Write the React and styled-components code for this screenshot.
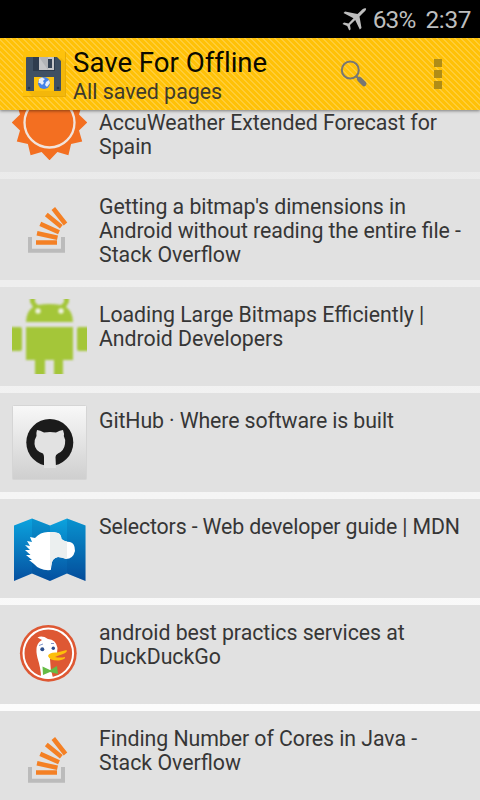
import React from "react";
import styled, { createGlobalStyle } from "styled-components";

const Global = createGlobalStyle`
  * { box-sizing: border-box; }
  body { margin: 0; background: #000; font-family: Roboto, sans-serif; }
`;

const Screen = styled.div`
  width: 480px;
  height: 800px;
  overflow: hidden;
  display: flex;
  flex-direction: column;
  background: linear-gradient(#e8e8e8 100px, #ffffff 800px);
`;

const StatusBar = styled.header`
  height: 38px;
  flex: none;
  display: flex;
  align-items: center;
  justify-content: flex-end;
  padding: 2px 9px 0 0;
  background: #000;
  color: #bebebe;
  font-size: 24.4px;
  line-height: 28px;
  svg { margin-right: 6px; }
`;

const StatusText = styled.span`
  margin-left: ${(p) => p.$gap || 0}px;
  letter-spacing: ${(p) => p.$track || 0}px;
  white-space: nowrap;
`;

const ActionBar = styled.div`
  height: 72px;
  flex: none;
  display: flex;
  align-items: center;
  position: relative;
  z-index: 1;
  padding: 0 38px 0 20px;
  background: repeating-linear-gradient(45deg, #ffc107 0 2.6px, #ffcd38 2.6px 4.24px);
  box-shadow: 0 1px 3px rgba(0, 0, 0, 0.45);
`;

const Titles = styled.div`
  flex: 1;
  margin-left: 6px;
  padding-top: 4px;
  white-space: nowrap;
`;

const Title = styled.div`
  font-size: 27.6px;
  line-height: 31px;
  color: #0a0a00;
  font-variant-ligatures: none;
`;

const Subtitle = styled.div`
  font-size: 21.4px;
  line-height: 27px;
  color: #3d3a2c;
`;

const IconButton = styled.button`
  border: 0;
  padding: 0;
  background: none;
  display: flex;
  margin-left: ${(p) => p.$gap || 0}px;
`;

const List = styled.main`
  flex: 1;
  min-height: 0;
  display: flex;
  flex-direction: column;
  justify-content: flex-start;
  gap: 7px;
  margin-top: -37px;
`;

const Row = styled.article`
  height: ${(p) => p.$height}px;
  flex: none;
  display: flex;
  align-items: flex-start;
  padding: 12px 12px 0;
  gap: 12px;
  background: #e1e1e1;
`;

const Thumb = styled.svg`
  width: 75px;
  height: 75px;
  flex: none;
  margin-top: ${(p) => p.$top || 0}px;
`;

const SoftGroup = styled.g`
  filter: blur(0.8px);
`;

const Lines = styled.div`
  padding-top: ${(p) => p.$top}px;
`;

const Line = styled.div`
  font-size: 21.3px;
  line-height: 24px;
  white-space: nowrap;
  color: #363636;
  font-feature-settings: "liga" 1;
  letter-spacing: ${(p) => p.$track || 0}px;
`;

function Airplane() {
  return (
    <svg width="25" height="24" viewBox="0 0 25 24">
      <path fill="#bebebe" d="M24 0.5C22.5-.3 20.5 1 19 2.700L15.500 6.100 3 3.500 1.500 5 11.500 10.300 6.500 15.500 2 14.500 0.500 16 5.200 18 7.200 22.500 8.700 21.200 8 17 13.200 12 17.800 21.500 19.500 20 17.500 8.500 21 5C22.700 3.500 24.500 1.800 24 .5Z" />
    </svg>
  );
}

function Floppy() {
  return (
    <svg width="47" height="50" viewBox="0 0 47 50">
      <rect x="3" y="2" width="43" height="46" rx="2" fill="#fec20c" />
      <path d="M3 47.500H45.500V3" fill="none" stroke="#d99f0a" strokeOpacity=".6" />
      <path d="M41 9 46 14V47H12L8 42Z" fill="#e9ae0a" opacity=".55" />
      <path d="M7 8H37L41 12V41Q41 42 40 42H7Q6 42 6 41V9Q6 8 7 8Z" fill="#3f5063" />
      <rect x="13" y="8" width="22" height="14" fill="#2e3c4e" />
      <rect x="19" y="8" width="15" height="13" fill="#c5c6c8" />
      <path d="M19 8H28V21Z" fill="#b2b4b7" />
      <rect x="28" y="10" width="4" height="9" fill="#344254" />
      <rect x="14" y="28" width="20" height="14" fill="#fdc20d" />
      <circle cx="24" cy="34" r="6" fill="#4583e8" />
      <path d="M19 30 22 28.500 25 30 23 32 24 34 22 36 20 34 18.500 34ZM26 33 29 31 30 34 27 38 25 36Z" fill="#e6edf8" />
      <circle cx="9" cy="39" r="1.300" fill="#26364a" />
      <circle cx="38" cy="39" r="1.300" fill="#26364a" />
    </svg>
  );
}

function Search() {
  return (
    <svg width="28" height="28" viewBox="0 0 28 28">
      <circle cx="10.300" cy="10" r="8.500" fill="none" stroke="#777773" strokeWidth="2" />
      <path d="M16 16 19 19" stroke="#777773" strokeWidth="2.400" />
      <path d="M19.500 19.300 24 23.800" stroke="#777773" strokeWidth="5" strokeLinecap="round" />
    </svg>
  );
}

function Overflow() {
  return (
    <svg width="8" height="30" viewBox="0 0 8 30" fill="#b08d17">
      <rect width="8" height="8" />
      <rect y="11" width="8" height="8" />
      <rect y="22" width="8" height="8" />
    </svg>
  );
}

const sunPoints = Array.from({ length: 24 }, (_, i) => {
  const a = (i * Math.PI) / 12;
  const r = i % 2 ? 30.5 : 37.8;
  return `${(37.5 + r * Math.sin(a)).toFixed(1)},${(37.5 + r * Math.cos(a)).toFixed(1)}`;
}).join(" ");

const art = {
  sun: (
    <>
      <polygon points={sunPoints} fill="#f36f21" />
      <circle cx="37.500" cy="37.500" r="25" fill="#f36f21" stroke="#f1e4dc" strokeWidth="2.300" />
    </>
  ),
  stack: (
    <>
      <path d="M18 44V57.800H51V44" fill="none" stroke="#bbbbbb" strokeWidth="4" />
      <g stroke="#f48024" strokeWidth="4.500">
        <path d="M24 49.500H45M25 40.300 45.500 44.800M28.300 30.900 47 39.200M34.300 21.500 49.300 33.700M41.300 15.500 53.500 31" />
      </g>
    </>
  ),
  android: (
    <SoftGroup fill="#a4c639">
      <path d="M18 -4H23V3L26 6Q37 4 49 6L52 3V-4H57V3L54 8Q61 13 61 23H14Q14 13 21 8L18 3Z" />
      <path d="M14 28H61V61H51V79H42V61H33V79H23V61H14ZM-4 28H8Q10 28 10 30V50Q10 52 8 52H-4ZM79 28H67Q65 28 65 30V50Q65 52 67 52H79Z" />
      <circle cx="26" cy="12" r="2.700" fill="#eef1df" />
      <circle cx="49" cy="12" r="2.700" fill="#eef1df" />
    </SoftGroup>
  ),
  github: (
    <>
      <defs>
        <linearGradient id="tile" x2="0" y2="1"><stop stopColor="#f8f8f8" /><stop offset="1" stopColor="#cfcfcf" /></linearGradient>
      </defs>
      <rect x=".5" y=".5" width="74" height="74" rx="1" fill="url(#tile)" stroke="#d5d5d5" />
      <circle cx="37.800" cy="37.500" r="23.500" fill="#1b1b1b" />
      <path d="M25 25Q28 25 32 27.500Q38 26.500 44 27.500Q48 25 51 25Q52.500 29 51.800 31Q54 35 53 39Q52 46 46 48.500Q43.500 49.500 43.500 52L44 63H32V52Q32 50 31 48.500Q23 46 22.500 39Q22 35 24.500 31Q24 28 25 25Z" fill="#e2e2e2" />
    </>
  ),
  mdn: (
    <>
      <defs>
        <linearGradient id="map" x2="0" y2="1"><stop stopColor="#0ba3de" /><stop offset="1" stopColor="#0550a0" /></linearGradient>
      </defs>
      <path d="M2 14.500 20 7.500 38 14.500 55 7.500 73.500 14.500V70L55 62.500 38 70 20 62.500 2 70Z" fill="url(#map)" />
      <path d="M20 7.500 38 14.500V70L20 62.500ZM55 7.500 73.500 14.500V70L55 62.500Z" fill="#003f84" opacity=".16" />
      <path d="M38.800 59Q28 60 22 53L17 49 20 49 14 44 18.500 44 13 39 18 39 13 34 18 35 15 30 20 31 18 26 23 27Q29 20 38 21Q43 21 46 22Q49 23 49.500 28Q53 31 58 31Q63 32 63 40Q61 48 54 48Q50 46 46 46Q41 47 40 51Z" fill="#fff" />
      <path d="M38 21Q43 21 46 22Q49 23 49.500 28Q52 30 55 30.500V48Q51 47 46 46Q40 47 39 55L38 57Z" fill="#ebefef" />
    </>
  ),
  duck: (
    <>
      <circle cx="36.300" cy="36.300" r="28.400" fill="#de5833" />
      <circle cx="36.300" cy="36.300" r="24.800" fill="#de5833" stroke="#fff" strokeWidth="2" />
      <path d="M29 60Q29 52 25.500 41Q22 27 30 23L25.500 20.500Q30 18 36 22Q44 22.500 45.500 31L45 36 38 42Q38 52 41 61Q34 63 29 60Z" fill="#fff" />
      <path d="M36 39Q37 35 45 35.500Q50 34 54.500 33Q56 35 51 37Q45 39 43 40Q48 41 53 40Q54 42 47 43.500Q38 44 36 39Z" fill="#fdbf0a" />
      <path d="M30.500 49.500 38 53 45 49 46 57 38 55 31 58Z" fill="#65bc46" />
      <circle cx="30.300" cy="32.300" r="2" fill="#2d4f8e" /><circle cx="41.300" cy="31.300" r="1.700" fill="#2d4f8e" />
      <path d="M27 28.500 31 27M39 26.500H42" stroke="#8295c9" />
    </>
  ),
};

const rows = [
  { icon: "sun", height: 99, textTop: 26, lines: [["AccuWeather Extended Forecast for", -0.06], ["Spain"]] },
  { icon: "stack", height: 101, top: 2, lines: [["Getting a bitmap's dimensions in", -0.04], ["Android without reading the entire file -", -0.08], ["Stack Overflow"]] },
  { icon: "android", height: 99, lines: [["Loading Large Bitmaps Efficiently |", -0.03], ["Android Developers", -0.03]] },
  { icon: "github", height: 99, lines: [["GitHub · Where software is built", -0.11]] },
  { icon: "mdn", height: 99, lines: [["Selectors - Web developer guide | MDN", -0.13]] },
  { icon: "duck", height: 99, lines: [["android best practics services at", -0.04], ["DuckDuckGo"]] },
  { icon: "stack", height: 99, lines: [["Finding Number of Cores in Java -", -0.06], ["Stack Overflow"]] },
];

export default function App() {
  return (
    <>
      <Global />
      <Screen>
        <StatusBar>
          <Airplane />
          <StatusText $track={-0.8}>63%</StatusText>
          <StatusText $gap={10} $track={-0.4}>2:37</StatusText>
        </StatusBar>
        <ActionBar>
          <Floppy />
          <Titles>
            <Title>Save For Offline</Title>
            <Subtitle>All saved pages</Subtitle>
          </Titles>
          <IconButton aria-label="Search"><Search /></IconButton>
          <IconButton aria-label="More" $gap={66}><Overflow /></IconButton>
        </ActionBar>
        <List>
          {rows.map((row, i) => (
            <Row key={i} $height={row.height}>
              <Thumb viewBox="0 0 75 75" $top={row.top}>{art[row.icon]}</Thumb>
              <Lines $top={row.textTop ?? 4}>
                {row.lines.map(([text, track]) => <Line key={text} $track={track}>{text}</Line>)}
              </Lines>
            </Row>
          ))}
        </List>
      </Screen>
    </>
  );
}
